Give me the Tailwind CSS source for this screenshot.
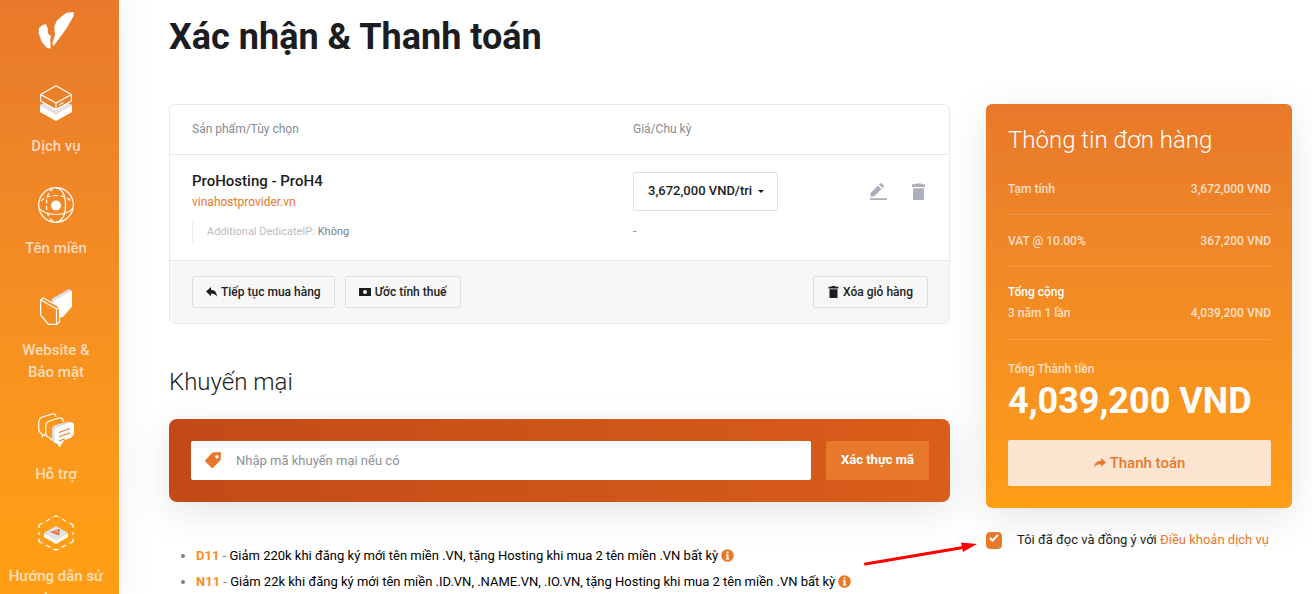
<!DOCTYPE html>
<html lang="vi">

<head>
  <meta charset="utf-8" />
  <meta name="viewport" content="width=device-width, initial-scale=1.0" />
  <title>Xác nhận &amp; Thanh toán</title>
  <script src="https://cdn.jsdelivr.net/npm/@tailwindcss/browser@4"></script>
</head>

<body class="flex h-screen overflow-hidden bg-white font-['Roboto',sans-serif] text-[13px] text-[#1b1d22]">
  <!-- SIDEBAR -->
  <aside class="relative z-10 w-[119px] shrink-0 h-screen overflow-hidden bg-linear-to-b from-[#e8792b] to-[#ff9e16] to-90% pr-[7px] shadow-[0_0_40px_rgba(0,0,0,0.08)]">
    <a href="#" aria-label="Trang chủ" class="block pt-3">
      <svg class="mx-auto w-9 h-[37px]" viewBox="0 0 36 37" fill="#fff">
        <path d="M35.700 0V4L28.600 16.300 20 28l-4.500 6-1.300-2.500L17 23l-.8-8.300 2.500-6L24 4l4.600-3.300z" />
        <path d="M1 16q3-3.500 7-3.700L9.700 16.300l.3 5 1.500 2 1.500.7-.8 4 .5 8.700-4-1L3.700 29.700.7 21.300z" />
      </svg>
    </a>
    <nav class="flex flex-col gap-[30px] pt-9 text-center text-[15px]/[22px] font-medium text-white/70">
      <a href="#" class="flex flex-col items-center gap-[14px]">
        <svg class="size-9" viewBox="0 0 36 36" fill="none">
          <path d="M2 20l16 9 16-9v7l-16 9-16-9z" fill="#fff" />
          <path d="M2 20l16-9 16 9-16 9z" fill="#e2e2e8" />
          <path d="M18 .8l15.400 8.700v6.500L18 24.500 2.600 16V9.500z" fill="#ed8129" stroke="#fff" stroke-width="1.200" stroke-linejoin="round" />
          <path d="M2.600 9.500L18 18l15.400-8.500M18 18v6.500M21 20l4.500-2.500" stroke="#fff" stroke-width="1.200" />
        </svg>
        Dịch vụ
      </a>
      <a href="#" class="flex flex-col items-center gap-[14px]">
        <svg class="size-9" viewBox="0 0 36 36" fill="none" stroke="#fff" stroke-width="1.200">
          <circle cx="18" cy="18" r="17.300" />
          <path d="M1 21c3 4 10 6.500 17 6.500S32 25 35 21" />
          <path d="M18 .8c7 1 9.500 9 9.500 17.200S25 34 18 35.300" />
          <path d="M15 1.500C9.500 5 8.500 12 8.500 18c0 7 1.500 14 8 17" stroke-dasharray="4 2.500" />
          <path d="M3 14c4-4 9-5.500 15-5.500S29 10 33 14" stroke-dasharray="4 3" />
          <circle cx="18" cy="18.500" r="5" fill="#fff" stroke="none" />
        </svg>
        Tên miền
      </a>
      <a href="#" class="flex flex-col items-center gap-[14px]">
        <svg class="size-9" viewBox="0 0 36 36" fill="none">
          <path d="M14 9.500L31 0l3 2v2L17 13v10l-3-1z" fill="#dedee4" />
          <path d="M16 11.500L34 1.500v16L25 28l-9 1z" fill="#fff" />
          <path d="M5.500 9l16 9v15l-3 2.400h-8L2.600 26V10.800z" fill="#f58e20" />
          <path d="M2.600 10.800L18.500 20v15.400h-8L2.600 26zM2.600 10.800L5.500 9l16 9-3 2M21.500 18v15l-3 2.400" stroke="#fff" stroke-width="1.200" stroke-linejoin="round" />
        </svg>
        <span class="px-4">Website &amp; Bảo mật</span>
      </a>
      <a href="#" class="flex flex-col items-center gap-[14px]">
        <svg class="size-9" viewBox="0 0 36 36" fill="none">
          <path d="M7.500 22.500l-1.600-1-1.500 2-.6-3C1.500 19.500.700 18 .7 15.500V9.500C.7 7 2 5 4.500 4L14 1c2.500-.6 4 .4 4 3M14.500 25l-1 2-2-2.500c-2.500-.5-3.800-2-3.800-4.500v-6.500c0-2.500 1.300-4.500 3.800-5.500L21 5c2.500-.6 4 .4 4.500 4" stroke="#fff" stroke-width="1.200" />
          <path d="M14 17c0-2.500 1-4 3.500-5l13-3.500L35 10v6L19 31c-3-1-5-2.500-5-5z" fill="#dedee4" />
          <path d="M16.500 19c0-2.500 1-4 3.500-5l12-4.300c2.500-.7 4 .3 4 2.800v7c0 2.500-1.300 4.500-3.800 5.500L26 27.500 21.500 34.500 19 30c-2 0-2.500-1.500-2.500-4z" fill="#fff" />
          <path d="M21 19.500l11-4M21 23.800l11-4M21 28l6-2.200" stroke="#e8792b" stroke-width="1.200" />
        </svg>
        Hỗ trợ
      </a>
      <a href="#" class="flex flex-col items-center gap-[14px]">
        <svg class="size-9" viewBox="0 0 36 36" fill="none">
          <path d="M15.500 2L18 .7 20.500 2M24 4l4 2.300M8 6.300L12 4M31.500 8l3.500 2v3M1 13v-3l3.500-2M35 17v3M1 17v3M35 23.500v3L31.500 28.500M1 23.500v3l3.500 2M8 30l4 2.300M28 30l-4 2.300M15.500 34l2.500 1.300 2.500-1.300" stroke="#fff" stroke-width="1.300" />
          <path d="M6 18l12 7 12-7v4l-12 7-12-7z" fill="#fff" />
          <path d="M6 18l12-7 12 7-12 7z" fill="#e2e2e8" />
          <path d="M14 17l7-2-.5 4.500zM17.500 17l2 1" stroke="#dc6c2c" stroke-width="1.300" />
        </svg>
        <span class="px-1">Hướng dẫn sử dụng</span>
      </a>
    </nav>
  </aside>

  <!-- MAIN -->
  <main class="flex-1 min-w-0 pl-[50px] pr-5">
    <h1 class="pt-[14px] text-4xl/[46px] font-bold">Xác nhận &amp; Thanh toán</h1>

    <div class="mt-11 flex items-start gap-9">
      <div class="flex-1 min-w-0">
        <!-- CART -->
        <section class="overflow-hidden rounded-md border border-[#e8e9ea]">
          <table class="w-full table-fixed text-left">
            <thead>
              <tr class="h-[49px] border-b border-[#e8e9ea] text-xs text-[#868a91]">
                <th class="pl-[22px] font-normal">Sản phẩm/Tùy chọn</th>
                <th class="w-[236px] font-normal">Giá/Chu kỳ</th>
                <th class="w-20" aria-label="Thao tác"></th>
              </tr>
            </thead>
            <tbody>
              <tr class="align-top">
                <td class="pl-[22px] pt-4 pb-[18px]">
                  <div class="text-[15px]/5 font-medium">ProHosting - ProH4</div>
                  <a href="#" class="mt-px block text-xs/5 text-[#e8792b]">vinahostprovider.vn</a>
                  <div class="mt-[10px] border-l border-[#e8e9ea] pl-[14px] text-[11px]/5 text-[#b9bcc2]">Additional DedicateIP: <span class="text-[#7b7e85]">Không</span></div>
                </td>
                <td class="pt-[17px]">
                  <div class="relative w-[145px]">
                    <select aria-label="Chu kỳ" class="h-[39px] w-full appearance-none rounded-xs border border-[#dddee1] bg-white pl-[14px] text-[13px] font-medium">
                      <option>3,672,000 VND/tri</option>
                    </select>
                    <svg class="pointer-events-none absolute right-[14px] top-[18px] w-1.5 h-[3px]" viewBox="0 0 6 3"><path d="M0 0h6L3 3z" fill="#1b1d22" /></svg>
                  </div>
                  <div class="mt-[10px] text-xs/5 text-[#868a91]">-</div>
                </td>
                <td class="pt-7">
                  <div class="flex gap-[25px] pl-px text-[#adafbb]">
                    <button type="button" aria-label="Sửa">
                      <svg class="w-[17px] h-[18px]" viewBox="0 0 17 18" fill="currentColor"><path d="M0 15.200h17V17H0zM.5 13.500V10L8 2.500 11.500 6 4 13.500zM9 1.600L10.200.4c.4-.4 1-.4 1.400 0l2.100 2.100c.4.400.4 1 0 1.400L12.500 5z" /></svg>
                    </button>
                    <button type="button" aria-label="Xóa">
                      <svg class="w-[13px] h-[18px]" viewBox="0 0 13 18" fill="currentColor"><path d="M0 1.300h3L4 .5h5l1 .8h3V4H0zM1 5.200h11V17H1z" /></svg>
                    </button>
                  </div>
                </td>
              </tr>
            </tbody>
          </table>
          <div class="flex gap-[10px] border-t border-[#e8e9ea] bg-[#f7f7f7] py-[15px] pl-[22px] pr-[21px] text-xs font-medium">
            <button type="button" class="flex h-8 items-center gap-1 rounded-xs border border-[#dddee1] px-[13px]">
              <svg class="w-[11px] h-[10px]" viewBox="0 0 11 10" fill="currentColor"><path d="M5 0v2.700C8.500 2.900 10.800 5 11 9.800 9.500 7.500 8 6.600 5 6.600v2.600L0 4.600z" /></svg>
              Tiếp tục mua hàng
            </button>
            <button type="button" class="flex h-8 items-center gap-1 rounded-xs border border-[#dddee1] px-[13px]">
              <svg class="w-3 h-2" viewBox="0 0 12 8" fill="currentColor" fill-rule="evenodd"><path d="M.5 0h11q.5 0 .5.500v7q0 .5-.5.500H.5Q0 8 0 7.500v-7Q0 0 .5 0zM6 2a2 2 0 100 4 2 2 0 000-4z" /></svg>
              Ước tính thuế
            </button>
            <button type="button" class="ml-auto flex h-8 items-center gap-1 rounded-xs border border-[#dddee1] px-[14px]">
              <svg class="w-[11px] h-3" viewBox="0 0 11 12" fill="currentColor"><path d="M.5.800h2.500L4 0h3l1 .8h2.500v1.700H.5zM1.500 3.300h8V12h-8z" /></svg>
              Xóa giỏ hàng
            </button>
          </div>
        </section>

        <!-- PROMO -->
        <h2 class="mt-[42px] text-2xl/8 font-light">Khuyến mại</h2>
        <form class="mt-[21px] flex gap-[15px] rounded-lg bg-linear-to-r from-[#c24a17] to-[#d95e1a] p-[22px] pr-[21px] shadow-[0_10px_40px_rgba(0,0,0,0.10)]">
          <div class="relative flex-1">
            <svg class="absolute left-[14px] top-[11px] size-4" viewBox="0 0 16 16" fill="#e8792b" fill-rule="evenodd"><path d="M7.500.500L15 0q1 0 1 1l-.3 7L8 15.700q-.8.600-1.500 0L.4 9.500q-.6-.8 0-1.500zM12 3a1.700 1.700 0 100 3.400A1.700 1.700 0 0012 3z" /></svg>
            <input type="text" aria-label="Mã khuyến mại" placeholder="Nhập mã khuyến mại nếu có" class="h-[39px] w-full rounded-xs bg-white pl-[45px] pr-3 text-[13px] placeholder:text-[#8d9096] focus:outline-none" />
          </div>
          <button type="button" class="h-[39px] rounded-xs bg-[#e8792b] px-[15px] text-[13px] font-bold text-white">Xác thực mã</button>
        </form>
        <ul class="mt-[41px] list-disc pl-[27px] text-[13px]/[26px] text-black marker:text-[#7b7e85]">
          <li><b class="text-[#ff8a1c]">D11</b> <span class="text-[#7b7e85]">-</span> Giảm 220k khi đăng ký mới tên miền .VN, tặng Hosting khi mua 2 tên miền .VN bất kỳ
            <svg class="inline size-[13px] align-[-2px]" viewBox="0 0 13 13"><circle cx="6.500" cy="6.500" r="6.300" fill="#e8792b" /><path d="M5.500 2.500h2v1.700h-2zM4.800 5.200h2.700v4h.8v1.200H4.800V9.200h.8V6.400h-.8z" fill="#fff" /></svg>
          </li>
          <li><b class="text-[#ff8a1c]">N11</b> <span class="text-[#7b7e85]">-</span> Giảm 22k khi đăng ký mới tên miền .ID.VN, .NAME.VN, .IO.VN, tặng Hosting khi mua 2 tên miền .VN bất kỳ
            <svg class="inline size-[13px] align-[-2px]" viewBox="0 0 13 13"><circle cx="6.500" cy="6.500" r="6.300" fill="#e8792b" /><path d="M5.500 2.500h2v1.700h-2zM4.800 5.200h2.700v4h.8v1.200H4.800V9.200h.8V6.400h-.8z" fill="#fff" /></svg>
          </li>
        </ul>
      </div>

      <!-- ORDER SUMMARY -->
      <div class="w-[306px] shrink-0">
        <section class="rounded-md bg-linear-to-b from-[#e8792b] to-[#ff9e16] px-[22px] pt-5 pb-[22px] pr-[21px] text-xs/5 font-medium text-white/75 shadow-[0_10px_40px_rgba(0,0,0,0.10)]">
          <h2 class="text-2xl/8 font-light text-white">Thông tin đơn hàng</h2>
          <dl class="mt-[22px]">
            <div class="flex justify-between border-b border-white/15 pt-px pb-[15px]">
              <dt>Tạm tính</dt>
              <dd>3,672,000 VND</dd>
            </div>
            <div class="flex justify-between border-b border-white/15 pt-4 pb-[15px]">
              <dt>VAT @ 10.00%</dt>
              <dd>367,200 VND</dd>
            </div>
            <div class="border-b border-white/15 pt-[15px] pb-4">
              <dt class="text-white">Tổng cộng</dt>
              <dd class="flex justify-between pt-px"><span>3 năm 1 lần</span><span>4,039,200 VND</span></dd>
            </div>
            <div class="pt-[19px]">
              <dt>Tổng Thành tiền</dt>
              <dd class="text-4xl/[44px] font-bold text-white">4,039,200 VND</dd>
            </div>
          </dl>
          <button type="button" class="mt-[17px] flex h-[46px] w-full items-center justify-center gap-1 rounded-xs bg-[#fce5d0] text-[15px] font-medium text-[#e8792b]">
            <svg class="w-3 h-[10px]" viewBox="0 0 12 10" fill="currentColor"><path d="M7 0l5 4.500-5 4.300V6.300C4 6.200 2 7 .3 9.300.3 5.500 2.500 2.900 7 2.700z" /></svg>
            Thanh toán
          </button>
        </section>

        <div class="relative mt-[22px] flex items-center gap-[15px]">
          <!-- pointer arrow -->
          <svg class="pointer-events-none absolute right-full top-2 mr-2 w-[114px] h-[30px]" viewBox="0 0 114 30" fill="#f00"><path d="M1.500 26L99 9.500" stroke="#f00" stroke-width="3" stroke-linecap="round" /><path d="M97 4.500L113 6 99 14z" /></svg>
          <span class="relative block w-4 h-[17px]">
            <input type="checkbox" id="agree" checked class="block w-4 h-[17px] appearance-none rounded-sm border border-[#e8792b] checked:bg-[#e8792b]" />
            <svg class="pointer-events-none absolute left-[3px] top-0.5 w-2.5 h-2" viewBox="0 0 10 8" fill="none"><path d="M.8 4L3.500 6.500 9 1" stroke="#fff" stroke-width="2" /></svg>
          </span>
          <label for="agree" class="text-[13px]/5">Tôi đã đọc và đồng ý với <a href="#" class="text-[#e8792b]">Điều khoản dịch vụ</a></label>
        </div>
      </div>
    </div>
  </main>
</body>

</html>
